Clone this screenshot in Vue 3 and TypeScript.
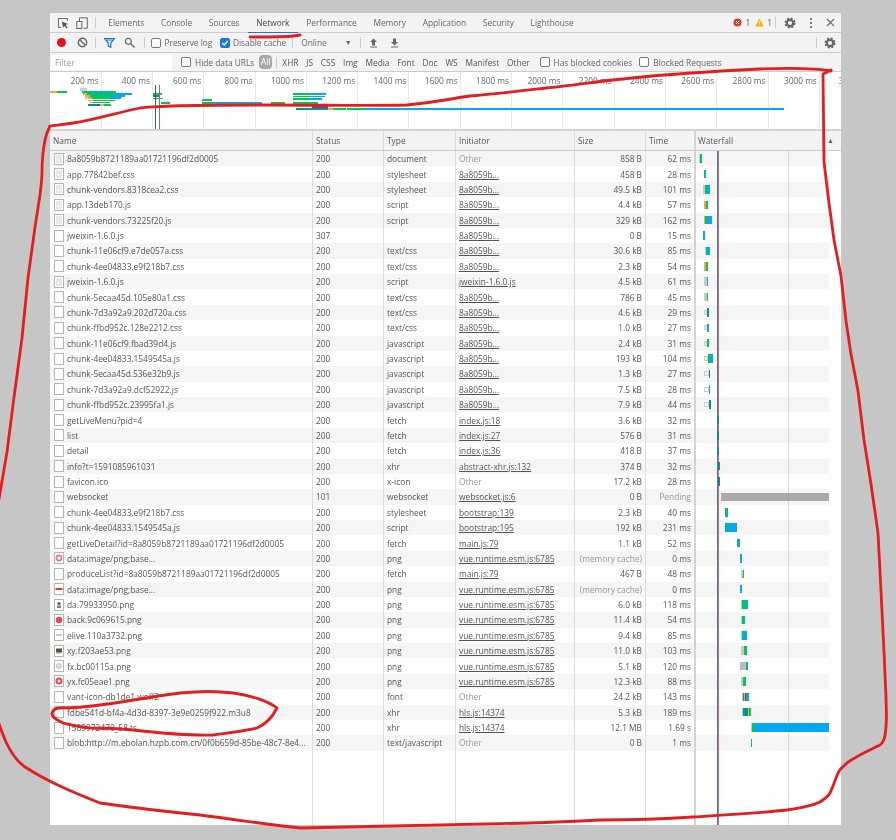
<script setup lang="ts">
type Seg = [number, number, string]
interface Row { n: string; s: string; t: string; i: string; link?: boolean; z: string; m: string; ic: string; bars: Seg[] }

const G = '#00c853', B = '#03a9f4', T = '#009688', O = '#f4a742', L = '#c9c9c9', D = '#0f8a96', P = '#9c27b0', W = '#aaaaaa', E = 'box'

const rows: Row[] = [
  { n: '8a8059b8721189aa01721196df2d0005', s: '200', t: 'document', i: 'Other', z: '858 B', m: '62 ms', ic: 'doc', bars: [[699, 699.8, L], [699.8, 701.6, G]] },
  { n: 'app.77842bef.css', s: '200', t: 'stylesheet', i: '8a8059b...', link: true, z: '458 B', m: '28 ms', ic: 'doc', bars: [[704, 705.4, G], [705.4, 706, B]] },
  { n: 'chunk-vendors.8318cea2.css', s: '200', t: 'stylesheet', i: '8a8059b...', link: true, z: '49.5 kB', m: '101 ms', ic: 'doc', bars: [[703.4, 705, L], [705, 707, G], [707, 710, B]] },
  { n: 'app.13deb170.js', s: '200', t: 'script', i: '8a8059b...', link: true, z: '4.4 kB', m: '57 ms', ic: 'doc', bars: [[704, 705.8, O], [705.8, 708, G]] },
  { n: 'chunk-vendors.73225f20.js', s: '200', t: 'script', i: '8a8059b...', link: true, z: '329 kB', m: '162 ms', ic: 'doc', bars: [[703.6, 705.4, O], [705.4, 706.6, G], [706.6, 712, B]] },
  { n: 'jweixin-1.6.0.js', s: '307', t: '', i: '8a8059b...', link: true, z: '0 B', m: '15 ms', ic: 'blank', bars: [[703, 705.2, B]] },
  { n: 'chunk-11e06cf9.e7de057a.css', s: '200', t: 'text/css', i: '8a8059b...', link: true, z: '30.6 kB', m: '85 ms', ic: 'blank', bars: [[704.5, 705.5, L], [705.5, 707, G], [707, 710, B]] },
  { n: 'chunk-4ee04833.e9f218b7.css', s: '200', t: 'text/css', i: '8a8059b...', link: true, z: '2.3 kB', m: '54 ms', ic: 'blank', bars: [[704, 705.8, O], [705.8, 708, G]] },
  { n: 'jweixin-1.6.0.js', s: '200', t: 'script', i: 'jweixin-1.6.0.js', link: true, z: '4.5 kB', m: '61 ms', ic: 'doc', bars: [[704, 706.5, L], [706.5, 707.4, O], [707.4, 708, B]] },
  { n: 'chunk-5ecaa45d.105e80a1.css', s: '200', t: 'text/css', i: '8a8059b...', link: true, z: '786 B', m: '45 ms', ic: 'blank', bars: [[704, 706.5, L], [706.5, 708, G]] },
  { n: 'chunk-7d3a92a9.202d720a.css', s: '200', t: 'text/css', i: '8a8059b...', link: true, z: '4.6 kB', m: '29 ms', ic: 'blank', bars: [[704, 707, E], [707, 709, T]] },
  { n: 'chunk-ffbd952c.128e2212.css', s: '200', t: 'text/css', i: '8a8059b...', link: true, z: '1.0 kB', m: '27 ms', ic: 'blank', bars: [[704, 707.4, E], [707.4, 709, '#17a9c9']] },
  { n: 'chunk-11e06cf9.fbad39d4.js', s: '200', t: 'javascript', i: '8a8059b...', link: true, z: '2.4 kB', m: '31 ms', ic: 'blank', bars: [[704, 707.4, E], [707.4, 709.4, G]] },
  { n: 'chunk-4ee04833.1549545a.js', s: '200', t: 'javascript', i: '8a8059b...', link: true, z: '193 kB', m: '104 ms', ic: 'blank', bars: [[704, 708, E], [708, 710, G], [710, 713.4, B]] },
  { n: 'chunk-5ecaa45d.536e32b9.js', s: '200', t: 'javascript', i: '8a8059b...', link: true, z: '1.3 kB', m: '27 ms', ic: 'blank', bars: [[704, 708.6, E], [709, 710.2, T]] },
  { n: 'chunk-7d3a92a9.dcf52922.js', s: '200', t: 'javascript', i: '8a8059b...', link: true, z: '7.5 kB', m: '28 ms', ic: 'blank', bars: [[704, 708.6, E], [709, 710.4, '#17a9c9']] },
  { n: 'chunk-ffbd952c.23995fa1.js', s: '200', t: 'javascript', i: '8a8059b...', link: true, z: '7.9 kB', m: '44 ms', ic: 'blank', bars: [[704, 708.6, E], [709, 711, T]] },
  { n: 'getLiveMenu?pid=4', s: '200', t: 'fetch', i: 'index.js:18', link: true, z: '3.6 kB', m: '32 ms', ic: 'blank', bars: [[717.2, 719, D]] },
  { n: 'list', s: '200', t: 'fetch', i: 'index.js:27', link: true, z: '576 B', m: '31 ms', ic: 'blank', bars: [[717.2, 719, D]] },
  { n: 'detail', s: '200', t: 'fetch', i: 'index.js:36', link: true, z: '418 B', m: '37 ms', ic: 'blank', bars: [[717.2, 719, D]] },
  { n: 'info?t=1591085961031', s: '200', t: 'xhr', i: 'abstract-xhr.js:132', link: true, z: '374 B', m: '32 ms', ic: 'blank', bars: [[717.8, 720, D]] },
  { n: 'favicon.ico', s: '200', t: 'x-icon', i: 'Other', z: '17.2 kB', m: '28 ms', ic: 'blank', bars: [[717.8, 720, D]] },
  { n: 'websocket', s: '101', t: 'websocket', i: 'websocket.js:6', link: true, z: '0 B', m: 'Pending', ic: 'blank', bars: [[721.3, 829, W]] },
  { n: 'chunk-4ee04833.e9f218b7.css', s: '200', t: 'stylesheet', i: 'bootstrap:139', link: true, z: '2.3 kB', m: '40 ms', ic: 'blank', bars: [[725, 728, '#0ab98a']] },
  { n: 'chunk-4ee04833.1549545a.js', s: '200', t: 'script', i: 'bootstrap:195', link: true, z: '192 kB', m: '231 ms', ic: 'blank', bars: [[725, 727, G], [727, 737, B]] },
  { n: 'getLiveDetail?id=8a8059b8721189aa01721196df2d0005', s: '200', t: 'fetch', i: 'main.js:79', link: true, z: '1.1 kB', m: '52 ms', ic: 'blank', bars: [[737.3, 740.3, '#0ab98a']] },
  { n: 'data:image/png;base...', s: '200', t: 'png', i: 'vue.runtime.esm.js:6785', link: true, z: '(memory cache)', m: '0 ms', ic: 'pink', bars: [[740.4, 742, B]] },
  { n: 'produceList?id=8a8059b8721189aa01721196df2d0005', s: '200', t: 'fetch', i: 'main.js:79', link: true, z: '467 B', m: '48 ms', ic: 'blank', bars: [[741, 742.8, L], [742.8, 744, G]] },
  { n: 'data:image/png;base...', s: '200', t: 'png', i: 'vue.runtime.esm.js:6785', link: true, z: '(memory cache)', m: '0 ms', ic: 'dash', bars: [[740.4, 742, B]] },
  { n: 'da.79933950.png', s: '200', t: 'png', i: 'vue.runtime.esm.js:6785', link: true, z: '6.0 kB', m: '118 ms', ic: 'photo', bars: [[740.6, 742, L], [742, 745.7, G], [745.7, 748, B]] },
  { n: 'back.9c069615.png', s: '200', t: 'png', i: 'vue.runtime.esm.js:6785', link: true, z: '11.4 kB', m: '54 ms', ic: 'red', bars: [[741, 742, L], [742, 743.5, G], [743.5, 745, B]] },
  { n: 'elive.110a3732.png', s: '200', t: 'png', i: 'vue.runtime.esm.js:6785', link: true, z: '9.4 kB', m: '85 ms', ic: 'gdash', bars: [[740.6, 742.4, L], [742.4, 743.5, G], [743.5, 746.8, B]] },
  { n: 'xy.f203ae53.png', s: '200', t: 'png', i: 'vue.runtime.esm.js:6785', link: true, z: '11.0 kB', m: '103 ms', ic: 'photo2', bars: [[741, 744, L], [744, 746.7, G]] },
  { n: 'fx.bc00115a.png', s: '200', t: 'png', i: 'vue.runtime.esm.js:6785', link: true, z: '5.1 kB', m: '120 ms', ic: 'gray', bars: [[740.4, 745.7, '#bdbdbd'], [745.7, 747, G], [747, 747.8, B]] },
  { n: 'yx.fc05eae1.png', s: '200', t: 'png', i: 'vue.runtime.esm.js:6785', link: true, z: '12.3 kB', m: '88 ms', ic: 'ring', bars: [[741, 743, L], [743, 746, G]] },
  { n: 'vant-icon-db1de1.woff2', s: '200', t: 'font', i: 'Other', z: '24.2 kB', m: '143 ms', ic: 'blank', bars: [[741.7, 743, L], [743, 744, T], [744, 745, O], [745, 745.8, P], [745.8, 746.8, G], [746.8, 749, B]] },
  { n: 'fdbe541d-bf4a-4d3d-8397-3e9e0259f922.m3u8', s: '200', t: 'xhr', i: 'hls.js:14374', link: true, z: '5.3 kB', m: '189 ms', ic: 'blank', bars: [[741.7, 742.7, L], [742.7, 748.4, T], [748.4, 749.2, O], [749.2, 751.3, G]] },
  { n: '1589972470_58.ts', s: '200', t: 'xhr', i: 'hls.js:14374', link: true, z: '12.1 MB', m: '1.69 s', ic: 'blank', bars: [[750.6, 752, L], [752, 754.3, G], [754.3, 829, B]] },
  { n: 'blob:http://m.ebolan.hzpb.com.cn/0f0b659d-85be-48c7-8e4...', s: '200', t: 'text/javascript', i: 'Other', z: '0 B', m: '1 ms', ic: 'blank', bars: [[751, 752, B]] },
]

function segs(bars: Seg[]) {
  let cur = 696
  return bars.map(([a, b, c]) => {
    const st: Record<string, string> = { marginLeft: `${a - cur}px`, width: `${b - a}px` }
    cur = b
    if (c === 'box') return { st, box: true }
    st.background = c
    return { st, box: false }
  })
}

const tabs = ['Elements', 'Console', 'Sources', 'Network', 'Performance', 'Memory', 'Application', 'Security', 'Lighthouse']
const types = ['XHR', 'JS', 'CSS', 'Img', 'Media', 'Font', 'Doc', 'WS', 'Manifest', 'Other']
const ticks = Array.from({ length: 15 }, (_, i) => `${(i + 1) * 200} ms`)

const ov: [number, number, number, string][] = [
  [50, 57, 91, O], [57, 67, 91, G],
  [80, 87, 88, '#d0d0d0'], [80, 87, 89.6, '#d0d0d0'],
  [82, 90, 91, G], [90, 110, 91, B], [110, 116, 91, G],
  [83, 87, 93, O], [87, 115, 93, G], [115, 132, 93, B],
  [85, 90, 95, O], [90, 110, 95, G], [110, 125, 95, B],
  [85, 88, 97.3, '#d0d0d0'], [88, 92, 97.3, O], [92, 113, 97.3, G], [113, 121, 97.3, B],
  [88, 93, 99.6, O], [93, 115, 99.6, G],
  [90, 93, 101.7, O], [93, 110, 101.7, G],
  [88, 97, 104, T], [97, 100, 104, P], [100, 104, 104, O], [104, 111, 104, G],
  [153, 162, 93, G], [153, 160, 95, T], [153, 163, 97.5, G], [161, 170, 102, G],
  [202, 212, 99.4, G], [202, 213, 102, G], [213, 262, 102, B],
  [271, 285, 102, G],
  [293, 310, 93, G], [310, 326, 93, B], [293, 310, 95.6, G], [310, 325, 95.6, B],
  [293, 310, 98.2, G], [310, 322, 98.2, B], [293, 318, 102, G],
  [312, 328, 106, P],
  [296, 328, 108, T], [328, 333, 108, O], [333, 346, 108, G], [347, 364, 108, G], [364, 784, 108, B],
]
function ovStyle(o: [number, number, number, string]) {
  return { left: `${o[0] - 50}px`, width: `${o[1] - o[0]}px`, top: `${o[2] - 72}px`, background: o[3] }
}
</script>

<template>
  <div class="page">
    <div class="devtools">
      <div class="bar tabs">
        <svg class="ic inspect" width="12" height="12" viewBox="0 0 12 12"><path d="M4 10.5H1.5V1.5h9V4" fill="none" stroke="#666" stroke-width="1"/><path d="M5 4.5l6 2.6-2.4 1 2 2.4-1 .9-2-2.4L6 10.5z" fill="#555"/></svg>
        <svg class="ic device" width="12" height="12" viewBox="0 0 12 12"><path d="M3.5 4V.8h7.8v10.4H7.5" fill="none" stroke="#666"/><rect x=".8" y="4.5" width="5" height="7" fill="none" stroke="#666"/></svg>
        <i class="sep first"></i>
        <span v-for="t in tabs" :key="t" class="tab" :class="{ on: t === 'Network' }">{{ t }}</span>
        <span class="grow"></span>
        <svg width="9" height="9" viewBox="0 0 9 9"><circle cx="4.5" cy="4.5" r="4" fill="#e03a30"/><path d="M3 3l3 3M6 3L3 6" stroke="#fff"/></svg>
        <span class="count">1</span>
        <svg class="warn" width="9" height="9" viewBox="0 0 9 9"><path d="M4.5 .5L8.8 8.5H.2z" fill="#f4b400"/><path d="M4.5 3.2v2.6M4.5 6.5v1" stroke="#fff" stroke-width=".8"/></svg>
        <span class="count">1</span>
        <i class="sep rt"></i>
        <svg class="gear g1" width="12" height="12" viewBox="0 0 12 12"><circle cx="6" cy="6" r="3.2" fill="none" stroke="#666" stroke-width="2.2"/><circle cx="6" cy="6" r="4.7" fill="none" stroke="#666" stroke-width="1.6" stroke-dasharray="2.1 1.6"/></svg>
        <svg class="dots" width="4" height="12" viewBox="0 0 4 12"><circle cx="2" cy="2" r="1.1" fill="#666"/><circle cx="2" cy="6" r="1.1" fill="#666"/><circle cx="2" cy="10" r="1.1" fill="#666"/></svg>
        <svg class="close" width="9" height="9" viewBox="0 0 9 9"><path d="M1 1l7 7M8 1L1 8" stroke="#666" stroke-width="1.1"/></svg>
      </div>

      <div class="bar tools">
        <span class="rec"></span>
        <svg class="block" width="11" height="11" viewBox="0 0 11 11"><circle cx="5.5" cy="5.5" r="4.2" fill="none" stroke="#666" stroke-width="1.4"/><path d="M2.6 2.6l5.8 5.8" stroke="#666" stroke-width="1.4"/></svg>
        <i class="sep s2"></i>
        <svg class="funnel" width="11" height="10" viewBox="0 0 11 10"><path d="M.5 .5h10L6.8 5v4.4L4.2 8V5zM2.6 2h5.8" fill="none" stroke="#1a73e8" stroke-width="1.2"/></svg>
        <svg class="search" width="11" height="11" viewBox="0 0 11 11"><circle cx="4.3" cy="4.3" r="3" fill="none" stroke="#666" stroke-width="1.2"/><path d="M6.5 6.5l4 4" stroke="#666" stroke-width="1.4"/></svg>
        <i class="sep s3"></i>
        <span class="cb c1"></span><span class="lbl l1">Preserve log</span>
        <span class="cb chk c2"><svg width="8" height="8" viewBox="0 0 8 8"><path d="M1.2 4l2 2 3.6-4" fill="none" stroke="#fff" stroke-width="1.3"/></svg></span><span class="lbl l2">Disable cache</span>
        <i class="sep s4"></i>
        <span class="lbl online">Online</span>
        <span class="tri">▼</span>
        <i class="sep s5"></i>
        <svg class="up" width="9" height="10" viewBox="0 0 9 10"><path d="M4.5 .5L8 4H6v3.4H3V4H1zM1 8.6h7v1H1z" fill="#666"/></svg>
        <svg class="down" width="9" height="10" viewBox="0 0 9 10"><path d="M3 .5h3V4h2L4.5 7.4 1 4h2zM1 8.6h7v1H1z" fill="#666"/></svg>
        <span class="grow"></span>
        <i class="sep s6"></i>
        <svg class="gear g2" width="12" height="12" viewBox="0 0 12 12"><circle cx="6" cy="6" r="3.2" fill="none" stroke="#666" stroke-width="2.2"/><circle cx="6" cy="6" r="4.7" fill="none" stroke="#666" stroke-width="1.6" stroke-dasharray="2.1 1.6"/></svg>
      </div>

      <div class="bar filter">
        <span class="input">Filter</span>
        <span class="cb c3"></span><span class="lbl l3">Hide data URLs</span>
        <span class="pill">All</span>
        <i class="sep s7"></i>
        <span v-for="t in types" :key="t" class="type">{{ t }}</span>
        <span class="cb c4"></span><span class="lbl l4">Has blocked cookies</span>
        <span class="cb c5"></span><span class="lbl l5">Blocked Requests</span>
      </div>

      <div class="overview">
        <div class="ticks">
          <span v-for="t in ticks" :key="t" class="tick">{{ t }}</span>
          <span class="tick last">3</span>
        </div>
        <i v-for="(o, k) in ov" :key="k" class="ovbar" :style="ovStyle(o)"></i>
        <i class="mark m1"></i>
        <i class="mark m2"></i>
      </div>

      <div class="grid head">
        <div class="c">Name</div>
        <div class="c">Status</div>
        <div class="c">Type</div>
        <div class="c">Initiator</div>
        <div class="c">Size</div>
        <div class="c">Time</div>
        <div class="c wf">Waterfall<span class="arrow">▲</span></div>
      </div>

      <div class="body">
        <div v-for="(r, k) in rows" :key="k" class="grid row" :class="{ alt: k % 2 === 0 }">
          <div class="c name">
            <svg class="file" width="10" height="12" viewBox="0 0 10 12">
              <rect x=".5" y=".5" width="9" height="11" fill="#fff" stroke="#b5b5b5"/>
              <g v-if="r.ic === 'doc'" stroke="#d0d0d0"><path d="M2 3h6M2 5h6M2 7h2M5 7h3M2 9h6"/></g>
              <circle v-else-if="r.ic === 'pink'" cx="5" cy="6" r="2.6" fill="none" stroke="#f46a8c" stroke-width="1.6"/>
              <rect v-else-if="r.ic === 'dash'" x="1.5" y="5" width="7" height="2" fill="#e53935"/>
              <g v-else-if="r.ic === 'photo'"><circle cx="5" cy="4.5" r="1.6" fill="#6b5a4a"/><rect x="3" y="6.5" width="4" height="2.5" fill="#8a7a6a"/></g>
              <circle v-else-if="r.ic === 'red'" cx="5" cy="6" r="3.2" fill="#e8474c"/>
              <rect v-else-if="r.ic === 'gdash'" x="2" y="5.5" width="6" height="1" fill="#999"/>
              <g v-else-if="r.ic === 'photo2'"><rect x="2" y="3.5" width="6" height="4" fill="#4a5a3a"/><rect x="2.5" y="7" width="5" height="1.5" fill="#a89a7a"/></g>
              <circle v-else-if="r.ic === 'gray'" cx="5" cy="6" r="2.6" fill="#ddd" stroke="#c8c8c8"/>
              <circle v-else-if="r.ic === 'ring'" cx="5" cy="6" r="2.5" fill="none" stroke="#ee4444" stroke-width="2"/>
            </svg>
            <span class="txt">{{ r.n }}</span>
          </div>
          <div class="c">{{ r.s }}</div>
          <div class="c">{{ r.t }}</div>
          <div class="c"><span :class="r.link ? 'link' : 'dim'">{{ r.i }}</span></div>
          <div class="c num" :class="{ dim: r.z.startsWith('(') }">{{ r.z }}</div>
          <div class="c num" :class="{ dim: r.m === 'Pending' }">{{ r.m }}</div>
          <div class="c wf bars">
            <i v-for="(s, j) in segs(r.bars)" :key="j" class="seg" :class="{ box: s.box }" :style="s.st"></i>
          </div>
        </div>
        <div class="grid row fill">
          <div class="c"></div><div class="c"></div><div class="c"></div><div class="c"></div><div class="c"></div><div class="c"></div><div class="c wf"></div>
        </div>
        <i class="vline gl"></i>
        <i class="vline bl"></i>
        <i class="vline rd"></i>
      </div>
    </div>

    <svg class="ink" width="896" height="840" viewBox="0 0 896 840">
      <g fill="none" stroke="#e31e1e" stroke-width="2.8" stroke-linecap="round" stroke-linejoin="round">
        <path d="M250 37 C265 37 285 37 293 36 L300 35"/>
        <path d="M831 71 C815 68 790 68 760 69 C720 71 670 74 632 78 C600 81 570 86 546 88 C520 91 495 94 470 96 C450 99 430 103 407 105 C370 106 320 105 273 105 C230 105 200 105 173 106 C155 107 150 107 140 108 C115 113 95 120 73 123 C62 125 55 125 50 126 C48 130 46 135 45 140 C43 150 42 160 42 172 C42 180 41 185 40 195 L35 227 L28 278 L22 338 L13 405 L7 452 L-2 505"/>
        <path d="M-3 718 C0 727 3 735 6 742 C12 755 18 762 25 767 C50 783 75 793 100 803 C135 808 170 812 200 815 C240 820 270 825 300 828 C380 826 460 824 530 823 C560 822 580 821 600 820 C640 820 665 819 693 817 C725 815 760 813 787 810 C800 808 812 806 820 802 C826 798 829 795 830 793 C833 787 835 780 838 773 C841 767 845 765 847 763 C858 755 870 750 880 745 C884 742 885 738 886 727 C887 715 886 705 886 697 L884 652 L881 591 L878 533 L871 484 L864 440 L858 391 L851 354 L846 321 L841 276 L834 240 L829 203 L824 162 L823 74 L831 70"/>
        <path d="M63 723 C57 720 51 717 52 713 C53 710 56 708 60 708 C72 708 86 707 100 705 C125 702 155 696 180 693 C200 691 218 691 233 693 C250 695 268 701 277 708 C273 716 266 724 257 728 C245 731 228 733 213 735 C190 736 160 733 133 730 C115 728 103 728 90 728 C80 727 72 725 63 723"/>
      </g>
    </svg>
  </div>
</template>

<style>
html, body { margin: 0; background: #c6c6c6; }
</style>

<style scoped>
.page { position: relative; width: 896px; height: 840px; overflow: hidden; background: #c6c6c6; padding: 13px 55px 15px 50px; box-sizing: border-box; }
.devtools { height: 812px; display: flex; flex-direction: column; background: #fff; font: 8.35px "Open Sans", sans-serif; color: #555; filter: blur(0.35px); overflow: hidden; }
.bar { display: flex; align-items: center; background: #f3f3f3; border-bottom: 1px solid #ccc; box-sizing: border-box; flex: none; }
.grow { flex: 1; }
.sep { display: block; width: 1px; height: 11px; background: #ccc; flex: none; }
.ic { flex: none; }

.tabs { height: 20px; padding-left: 6px; }
.inspect { margin-left: 1px; }
.device { margin-left: 7px; }
.sep.first { margin: 0 4px 0 7px; }
.tab { padding: 0 8.35px; line-height: 20px; color: #666; box-sizing: border-box; margin-bottom: -1px; height: 20px; }
.tab.on { color: #444; border-bottom: 1px solid #1a73e8; }
.count { margin-left: 3px; color: #666; }
.warn { margin-left: 5px; }
.sep.rt { margin-left: 3px; }
.g1 { margin-left: 8px; }
.dots { margin-left: 13px; }
.close { margin-left: 13px; margin-right: 6px; }

.tools { height: 20px; }
.rec { width: 9px; height: 9px; border-radius: 50%; background: #e8101c; margin-left: 7px; }
.block { margin-left: 11px; }
.s2 { margin-left: 7px; }
.funnel { margin-left: 8px; }
.search { margin-left: 9px; }
.s3 { margin-left: 9px; }
.cb { width: 8px; height: 8px; border: 1px solid #7a7a7a; border-radius: 2px; background: #fff; flex: none; display: flex; align-items: center; justify-content: center; }
.cb.chk { background: #1a73e8; border-color: #1a73e8; }
.lbl { color: #666; flex: none; }
.c1 { margin-left: 6px; }
.l1 { margin-left: 3.5px; }
.c2 { margin-left: 7.5px; }
.l2 { margin-left: 3px; }
.s4 { margin-left: 6px; }
.online { margin-left: 8px; }
.tri { margin-left: 18px; font-size: 7px; color: #666; }
.s5 { margin-left: 8px; }
.up { margin-left: 8px; }
.down { margin-left: 12px; }
.s6 { margin-right: 7px; }
.g2 { margin-right: 5px; }

.filter { height: 18px; border-bottom: none; }
.input { width: 121px; height: 15px; line-height: 15px; background: #fff; padding-left: 4px; box-sizing: border-box; color: #999; margin-left: 1px; }
.c3 { margin-left: 9px; }
.l3 { margin-left: 4px; }
.pill { width: 13px; height: 14px; line-height: 14px; margin-left: 5px; background: #a9a9a9; color: #fff; text-align: center; border-radius: 4px; }
.s7 { margin-left: 4px; margin-right: 5px; }
.type { margin-right: 7.8px; color: #555; }
.c4 { margin-left: 2px; }
.l4 { margin-left: 4px; }
.c5 { margin-left: 7px; }
.l5 { margin-left: 4px; }

.overview { position: relative; height: 60px; flex: none; background: #fff; border-top: 1px solid #ccc; box-sizing: border-box; border-bottom: 2px solid #d4d4d4; overflow: hidden; }
.ticks { display: flex; height: 100%; margin-left: 0.4px; }
.tick { flex: none; width: 51.3px; box-sizing: border-box; border-right: 1px solid #e8e8e8; text-align: right; padding: 3px 2px 0 0; color: #666; }
.tick.last { border-right: none; text-align: left; padding-left: 19px; }
.ovbar { position: absolute; height: 1.5px; }
.mark { position: absolute; width: 1px; top: 13px; bottom: 0; }
.m1 { left: 105px; background: #1a5fc8; }
.m2 { left: 109px; background: #d9534f; }

.grid { display: grid; grid-template-columns: 263px 71px 72px 119px 71px 50px 1fr; }
.head { height: 20px; flex: none; background: #f3f3f3; border-bottom: 1px solid #ccc; box-sizing: border-box; }
.c { border-right: 1px solid #ddd; padding: 0 3px; box-sizing: border-box; white-space: nowrap; overflow: hidden; display: flex; align-items: center; min-width: 0; }
.c.wf { border-right: none; padding: 0; }
.grid > .c:nth-child(6) { border-right: 2px solid #d4d4d4; }
.head .wf { padding-left: 2px; justify-content: space-between; overflow: visible; }
.arrow { font-size: 7px; color: #666; margin-right: 7px; }

.body { position: relative; flex: 1; display: flex; flex-direction: column; min-height: 0; }
.row { height: 15.39px; flex: none; }
.row.fill { flex: 1; height: auto; }
.row.alt { background: linear-gradient(to right, #f5f5f5 779px, #fff 779px); }
.name { padding-left: 4px; gap: 3px; }
.file { flex: none; }
.txt { overflow: hidden; text-overflow: clip; }
.link { text-decoration: underline; color: #555; }
.dim { color: #999; }
.num { justify-content: flex-end; padding-right: 3px; }
.bars { display: flex; align-items: center; position: relative; z-index: 1; }
.seg { display: block; height: 8.5px; flex: none; }
.seg.box { box-sizing: border-box; height: 5px; border: 1px solid #ccc; background: #fff; }
.vline { position: absolute; top: 0; bottom: 0; width: 1px; }
.gl { left: 738px; background: #ddd; mix-blend-mode: multiply; }
.bl { left: 667px; background: #4a6fc9; }
.rd { left: 668px; background: #cf6f7a; }

.ink { position: absolute; left: 0; top: 0; pointer-events: none; }
</style>
